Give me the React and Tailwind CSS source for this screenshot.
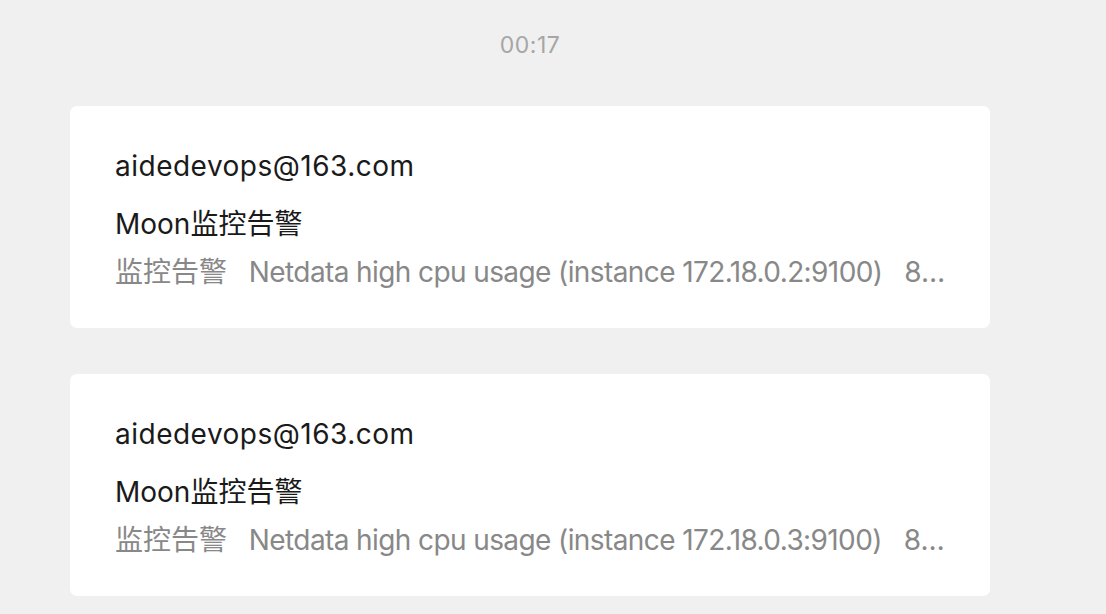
const messages = [
  {
    id: 1,
    from: 'aidedevops@163.com',
    subject: 'Moon监控告警',
    tag: '监控告警',
    preview: 'Netdata high cpu usage (instance 172.18.0.2:9100)   85.3% CPU usage on host',
  },
  {
    id: 2,
    from: 'aidedevops@163.com',
    subject: 'Moon监控告警',
    tag: '监控告警',
    preview: 'Netdata high cpu usage (instance 172.18.0.3:9100)   85.1% CPU usage on host',
  },
];

const MailCard = ({ from, subject, tag, preview }) => (
  <div className="bg-white rounded-[7px] pl-[45px] pr-[40px] pt-[42px] pb-[38px]">
    <p className="text-[28px] leading-[36px] tracking-[0.5px] text-[#1a1a1a]">{from}</p>
    <p className="mt-[22px] text-[28px] leading-[36px] text-[#1a1a1a]">{subject}</p>
    <p className="mt-[12px] text-[28px] leading-[36px] tracking-[-0.6px] text-[#888888] whitespace-pre overflow-hidden text-ellipsis">
      <span className="tracking-normal">{tag}</span>
      {'   ' + preview}
    </p>
  </div>
);

export default function App() {
  return (
    <div
      className="min-h-screen bg-[#f0f0f0] overflow-hidden"
      style={{ fontFamily: 'Inter, "Noto Sans CJK SC", sans-serif' }}
    >
      <div className="w-[1060px] px-[70px]">
        <div className="h-[90px] flex items-center justify-center text-[23px] tracking-[0.5px] text-[#a6a6a6]">
          00:17
        </div>
        <div className="mt-[16px] flex flex-col gap-[46px]">
          {messages.map((m) => (
            <MailCard key={m.id} {...m} />
          ))}
        </div>
      </div>
    </div>
  );
}
